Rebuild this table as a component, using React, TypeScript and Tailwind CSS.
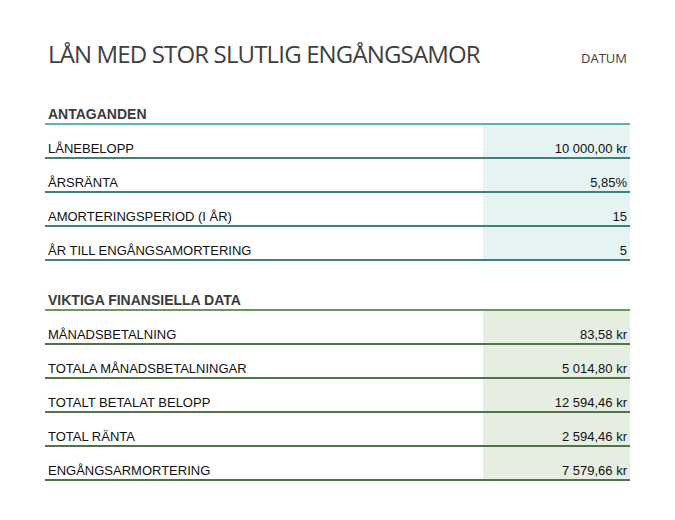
import React from "react";

const arial = { fontFamily: '"Liberation Sans", Arial, sans-serif' };

type Row = { label: string; value: string };

const assumptions: Row[] = [
  { label: "LÅNEBELOPP", value: "10 000,00 kr" },
  { label: "ÅRSRÄNTA", value: "5,85%" },
  { label: "AMORTERINGSPERIOD (I ÅR)", value: "15" },
  { label: "ÅR TILL ENGÅNGSAMORTERING", value: "5" },
];

const data: Row[] = [
  { label: "MÅNADSBETALNING", value: "83,58 kr" },
  { label: "TOTALA MÅNADSBETALNINGAR", value: "5 014,80 kr" },
  { label: "TOTALT BETALAT BELOPP", value: "12 594,46 kr" },
  { label: "TOTAL RÄNTA", value: "2 594,46 kr" },
  { label: "ENGÅNGSARMORTERING", value: "7 579,66 kr" },
];

function Section({
  title,
  rows,
  headerH,
  variant,
}: {
  title: string;
  rows: Row[];
  headerH: string;
  variant: "teal" | "green";
}) {
  const headBorder = variant === "teal" ? "border-[#5cb3ae]" : "border-[#679c58]";
  const rowBorder = variant === "teal" ? "border-[#3f807d]" : "border-[#52734a]";
  const cellBg = variant === "teal" ? "bg-[#e6f3f3]" : "bg-[#e6eee2]";
  return (
    <div>
      <div
        className={`${headerH} flex items-end border-b-2 ${headBorder} pl-[3px] text-[14px] leading-[17px] font-bold text-[#3b3b3b]`}
        style={arial}
      >
        {title}
      </div>
      {rows.map((r) => (
        <div
          key={r.label}
          className={`flex h-[34px] border-b-2 ${rowBorder} text-[13px] leading-[17px] text-[#111]`}
          style={arial}
        >
          <div className="flex flex-1 items-end pl-[3px]">{r.label}</div>
          <div className={`flex w-[147px] items-end justify-end pr-[3px] ${cellBg}`}>
            {r.value}
          </div>
        </div>
      ))}
    </div>
  );
}

export default function App() {
  return (
    <div className="min-h-[520px] w-[675px] bg-white">
      <div className="ml-[45px] w-[585px] pt-[38px]">
        <div
          className="flex items-baseline text-[#404040]"
          style={{ fontFamily: '"Open Sans", "Noto Sans", sans-serif' }}
        >
          <div className="ml-[3px] w-[432px] overflow-hidden whitespace-nowrap text-[24px] leading-[31px] tracking-[-0.85px]">
            LÅN MED STOR SLUTLIG ENGÅNGSAMORTERING
          </div>
          <div className="flex-1 pr-[3px] text-right text-[13px]">DATUM</div>
        </div>
        <Section title="ANTAGANDEN" rows={assumptions} headerH="h-[56px]" variant="teal" />
        <Section title="VIKTIGA FINANSIELLA DATA" rows={data} headerH="h-[50px]" variant="green" />
      </div>
    </div>
  );
}
